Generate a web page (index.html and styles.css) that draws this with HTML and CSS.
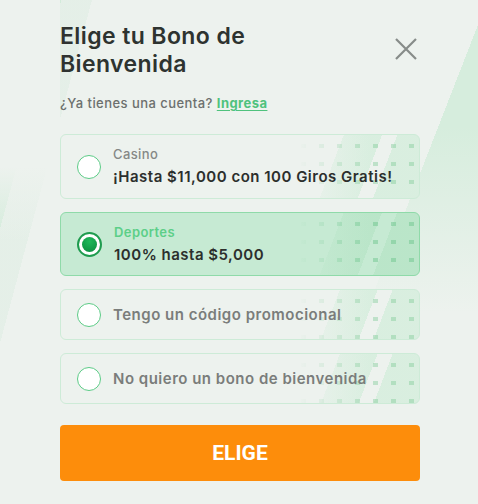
FILE: index.html
```html
<!DOCTYPE html>
<html lang="es">
<head>
<meta charset="utf-8">
<title>Elige tu Bono de Bienvenida</title>
<link rel="stylesheet" href="styles.css">
</head>
<body>
<div class="modal">
  <div class="header">
    <h1 class="title">Elige tu Bono de Bienvenida</h1>
    <button class="close" aria-label="Cerrar">
      <svg width="22" height="22" viewBox="0 0 22 22"><path d="M1 1L21 21M21 1L1 21" stroke="#878c89" stroke-width="2.2" fill="none"/></svg>
    </button>
  </div>
  <p class="login">¿Ya tienes una cuenta? <a href="#" class="login-link">Ingresa</a></p>

  <div class="options">
    <label class="option">
      <span class="radio"></span>
      <span class="option-text">
        <span class="option-label">Casino</span>
        <span class="option-main">¡Hasta $11,000 con 100 Giros Gratis!</span>
      </span>
    </label>
    <label class="option option-selected">
      <span class="radio radio-checked"><span class="radio-dot"></span></span>
      <span class="option-text">
        <span class="option-label label-green">Deportes</span>
        <span class="option-main">100% hasta $5,000</span>
      </span>
    </label>
    <label class="option option-short">
      <span class="radio"></span>
      <span class="option-text">
        <span class="option-plain">Tengo un código promocional</span>
      </span>
    </label>
    <label class="option option-short">
      <span class="radio"></span>
      <span class="option-text">
        <span class="option-plain">No quiero un bono de bienvenida</span>
      </span>
    </label>
  </div>

  <button class="cta">ELIGE</button>
</div>
</body>
</html>
```

FILE: styles.css
```css
html, body {
  margin: 0;
  padding: 0;
}
body {
  width: 478px;
  height: 504px;
  overflow: hidden;
  font-family: "Inter", "Roboto", sans-serif;
  background-color: #edf2ee;
  background-image:
    linear-gradient(#edf2ee, #edf2ee),
    linear-gradient(to bottom, rgba(237,242,238,0) 25%, #edf2ee 62%),
    linear-gradient(to bottom, #edf2ee 33%, rgba(237,242,238,0) 48%, rgba(237,242,238,0) 78%, #edf2ee 84%),
    linear-gradient(111.3deg, transparent 72.3%, #d6eddd 72.3%),
    linear-gradient(105deg, transparent 5%, rgba(205,234,214,0.8) 5%, rgba(205,234,214,0.8) 10%, transparent 10%),
    linear-gradient(105deg, transparent 10%, rgba(225,238,229,0.7) 10%, rgba(225,238,229,0.7) 15%, transparent 15%);
  background-size: 210px 170px, 130px 504px, 60px 504px, 478px 504px, 478px 504px, 478px 504px;
  background-repeat: no-repeat;
  background-position: right 0 bottom 0, right 0 top 0, 0 0, 0 0, 0 0, 0 0;
}
.modal {
  padding: 22px 58px 0 60px;
}
.header {
  display: flex;
  justify-content: space-between;
  align-items: flex-start;
}
.title {
  margin: 0;
  width: 230px;
  font-size: 23px;
  line-height: 28px;
  font-weight: 600;
  color: #2e3330;
  letter-spacing: 0.4px;
}
.close {
  margin: 16px 3px 0 0;
  padding: 0;
  border: 0;
  background: none;
  width: 22px;
  height: 22px;
  display: block;
}
.close svg { display: block; }
.login {
  margin: 16px 0 0;
  font-size: 13px;
  line-height: 18px;
  font-weight: 500;
  color: #6c706d;
  letter-spacing: 0.45px;
}
.login-link {
  color: #4fc27d;
  font-weight: 700;
  text-decoration: underline;
  text-underline-offset: 2px;
}
.options {
  margin-top: 22px;
  display: flex;
  flex-direction: column;
  gap: 13px;
}
.option {
  display: flex;
  align-items: center;
  gap: 12px;
  height: 65px;
  box-sizing: border-box;
  padding: 0 16px;
  border: 1px solid #cdebd7;
  border-radius: 6px;
  background-color: #edf2ee;
  background-image:
    linear-gradient(to right, #edf2ee 66%, rgba(237,242,238,0) 86%),
    conic-gradient(from 0deg at 5px 4px, transparent 75%, rgba(120,200,145,0.4) 0),
    linear-gradient(111deg, transparent 74%, rgba(215,238,222,0.9) 74%, rgba(215,238,222,0.9) 84%, transparent 84%, transparent 88%, rgba(215,238,222,0.9) 88%);
  background-size: 100% 100%, 18px 18px, 100% 100%;
  background-position: 0 0, 6px 9px, 0 0;
}
.option-selected {
  height: 64px;
  border-color: #8fdaa9;
  background-color: #c6ead3;
  background-image:
    linear-gradient(to right, #c6ead3 66%, rgba(198,234,211,0) 86%),
    conic-gradient(from 0deg at 5px 4px, transparent 75%, rgba(90,190,125,0.4) 0),
    linear-gradient(111deg, transparent 74%, rgba(185,229,200,0.9) 74%, rgba(185,229,200,0.9) 84%, transparent 84%, transparent 88%, rgba(185,229,200,0.9) 88%);
}
.option-short {
  height: 51px;
}
.radio {
  flex: none;
  width: 24px;
  height: 24px;
  box-sizing: border-box;
  border: 1px solid #5ccb86;
  border-radius: 50%;
  background: #fff;
  display: flex;
  align-items: center;
  justify-content: center;
}
.radio-checked {
  width: 25px;
  height: 25px;
  border: 2px solid #1f9c4f;
}
.radio-dot {
  width: 15px;
  height: 15px;
  border-radius: 50%;
  background: radial-gradient(circle at 50% 30%, #1fb85a, #0b8a3d);
}
.option-text {
  display: flex;
  flex-direction: column;
}
.option-label {
  font-size: 13px;
  line-height: 17px;
  font-weight: 500;
  color: #858886;
  letter-spacing: 0.4px;
}
.label-green {
  color: #5ccf88;
  font-weight: 600;
}
.option-main {
  margin-top: 4px;
  font-size: 15px;
  line-height: 20px;
  font-weight: 600;
  color: #2c2f2d;
  letter-spacing: 0.5px;
}
.option-plain {
  font-size: 15px;
  line-height: 20px;
  font-weight: 600;
  color: #7a7d7b;
  letter-spacing: 0.5px;
}
.cta {
  display: block;
  width: 100%;
  height: 56px;
  margin-top: 21px;
  border: 0;
  border-radius: 4px;
  background: #fd8d0b;
  color: #fff;
  font-family: "Roboto", "Inter", sans-serif;
  font-size: 21px;
  font-weight: 700;
  letter-spacing: 0;
}
```
